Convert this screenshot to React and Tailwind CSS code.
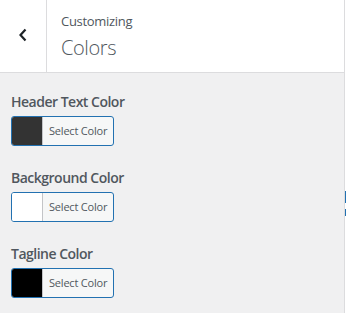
import React from "react";

const fields = [
  { label: "Header Text Color", color: "bg-[#333333]" },
  { label: "Background Color", color: "bg-white" },
  { label: "Tagline Color", color: "bg-black" },
];

function ColorPicker({ label, color }) {
  return (
    <div className="pt-[20px] pb-[3px]">
      <h4 className="text-[14px] font-semibold leading-[18px] tracking-[-0.5px] text-[#50575e]">{label}</h4>
      <button className="mt-[5px] flex h-[30px] w-[103px] overflow-hidden rounded-[3px] border border-[#2271b1] bg-[#f6f7f7]">
        <span className={`h-full w-[30px] ${color}`}></span>
        <span className="flex h-full flex-1 items-center border-l border-[#c3c4c7] pl-[6px] text-[11px] tracking-[-0.2px] text-[#50575e]">
          Select Color
        </span>
      </button>
    </div>
  );
}

export default function App() {
  return (
    <div className="flex h-[313px] w-[346px] overflow-hidden bg-white font-['Open_Sans',sans-serif]">
      <div className="flex w-[345px] flex-col border-r border-[#dcdcde] bg-[#f0f0f1]">
        {/* header */}
        <div className="flex h-[73px] shrink-0 border-b border-[#dcdcde] bg-white">
          <div className="flex w-[47px] items-center justify-center border-r border-[#dcdcde] pb-[3px]">
            <svg width="10" height="14" viewBox="0 0 10 14" fill="none">
              <path d="M7.5 1.5 2.5 7l5 5.5" stroke="#1d2327" strokeWidth="2.2" />
            </svg>
          </div>
          <div className="flex flex-col pl-[14px] pt-[12px]">
            <span className="text-[13px] leading-[18px] tracking-[-0.3px] text-[#50575e]">Customizing</span>
            <span className="mt-[6px] text-[20px] font-light leading-[24px] tracking-[-0.4px] text-[#50575e]">Colors</span>
          </div>
        </div>
        {/* controls */}
        <div className="flex flex-col px-[11px]">
          {fields.map((f) => (
            <ColorPicker key={f.label} label={f.label} color={f.color} />
          ))}
        </div>
      </div>
      <div className="flex w-[1px] flex-col">
        <div className="mt-[191px] h-[12px] bg-[#2271b1]"></div>
        <div className="mt-[6px] h-[7px] bg-[#2271b1]"></div>
      </div>
    </div>
  );
}
